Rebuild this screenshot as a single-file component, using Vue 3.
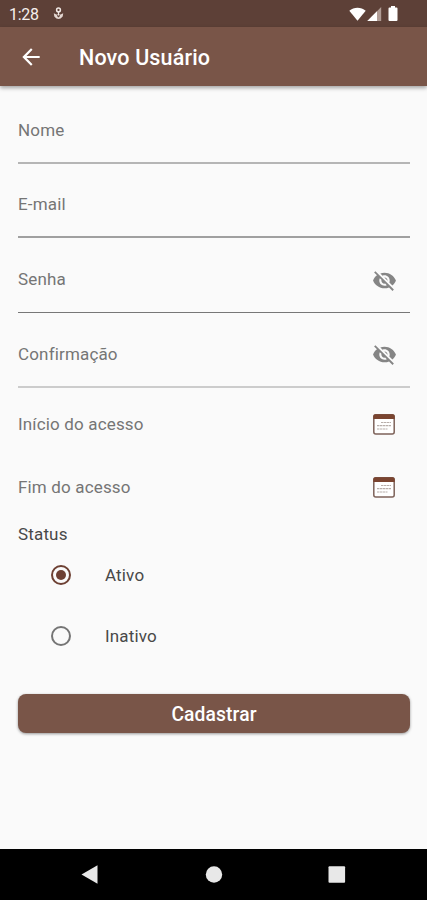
<template>
  <div class="screen">
    <header class="status-bar">
      <span class="clock">1:28</span>
      <svg class="debug-icon" width="11" height="13" viewBox="0 0 11 13">
        <circle cx="5.500" cy="3" r="1.900" fill="none" stroke="#f0e8e5" stroke-width="1.500" />
        <path d="M.8 6.300l2.500 1.200h4.400l2.500-1.200-.5 3.200q-4.200 5.200-8.400 0z" fill="#e3d6d1" />
        <path d="M4.200 8h2.600v1.300L5.500 10.500 4.200 9.300z" fill="#5d4037" />
        <path d="M5.500 4.500v4" stroke="#f0e8e5" stroke-width="1.200" />
      </svg>
      <div class="system-icons">
        <svg width="17" height="14" viewBox="0 0 17 14">
          <path d="M.3 3.700C4.900-.4 12.100-.4 16.700 3.700L8.500 13.700z" fill="#fff" />
        </svg>
        <svg width="15" height="14" viewBox="0 0 15 14">
          <path d="M14.200 0v14H.3z" fill="#b09c95" />
          <path d="M10 4.200V14H.3z" fill="#fff" />
        </svg>
        <svg class="battery" width="10" height="15" viewBox="0 0 10 15">
          <path d="M3 0h4v1.500h1.500q1 0 1 1V14q0 1-1 1h-7q-1 0-1-1V2.500q0-1 1-1H3z" fill="#fff" />
        </svg>
      </div>
    </header>

    <div class="app-bar">
      <button class="back" type="button" aria-label="Voltar">
        <svg width="26" height="26" viewBox="0 0 24 24" fill="#fff">
          <path d="M20 11H7.830l5.590-5.590L12 4l-8 8 8 8 1.410-1.410L7.830 13H20v-2z" />
        </svg>
      </button>
      <h1>Novo Usuário</h1>
    </div>

    <main class="form">
      <div v-for="field in fields" :key="field.name" class="field" :class="field.name">
        <span class="label">{{ field.label }}</span>
        <svg v-if="field.secret" class="eye" width="25" height="25" viewBox="0 0 24 24" fill="#858585">
          <path d="M12 7c2.760 0 5 2.240 5 5 0 .65-.13 1.260-.36 1.830l2.920 2.920c1.510-1.260 2.700-2.890 3.430-4.750-1.730-4.390-6-7.500-11-7.500-1.400 0-2.740.25-3.980.7l2.160 2.160C10.740 7.130 11.350 7 12 7zM2 4.270l2.280 2.280.46.46C3.080 8.300 1.780 10.020 1 12c1.730 4.390 6 7.500 11 7.500 1.550 0 3.030-.3 4.380-.84l.42.42L19.730 22 21 20.730 3.270 3 2 4.270zM7.530 9.800l1.550 1.550c-.05.21-.08.43-.08.65 0 1.660 1.340 3 3 3 .22 0 .44-.03.65-.08l1.550 1.550c-.67.33-1.410.53-2.200.53-2.760 0-5-2.240-5-5 0-.79.2-1.530.53-2.200zm4.310-.78l3.150 3.150.02-.16c0-1.660-1.340-3-3-3l-.17.01z" />
        </svg>
      </div>

      <div v-for="date in dates" :key="date" class="date-row">
        <span class="label">{{ date }}</span>
        <svg class="calendar" width="22" height="21" viewBox="0 0 22 21">
          <rect x=".8" y=".8" width="20.400" height="19.200" rx="2" fill="#fff" stroke="#7d6259" stroke-width="1.500" />
          <path d="M.3 5V2.500Q.3.2 2.500.2h17q2.200 0 2.200 2.300V5z" fill="#7a4430" />
          <path d="M8 8.500h10M4 11.700h14M4 15h10.500" stroke="#b8aeaa" stroke-width="1.200" stroke-dasharray="2.500 .5" />
        </svg>
      </div>

      <p class="status-title">Status</p>
      <label v-for="option in options" :key="option" class="option">
        <input v-model="status" type="radio" name="status" :value="option" />
        <span class="radio"></span>
        <span>{{ option }}</span>
      </label>

      <button class="submit" type="button">Cadastrar</button>
    </main>

    <nav class="nav-bar">
      <svg width="427" height="51" viewBox="0 0 427 51" fill="#e8e8e8">
        <path d="M81.500 25.500L97.500 16.200V34.800z" />
        <circle cx="214" cy="25.500" r="8.200" />
        <rect x="328.500" y="17.200" width="16.600" height="16.600" rx="1" />
      </svg>
    </nav>
  </div>
</template>

<script setup>
import { ref } from "vue";

const fields = [
  { name: "nome", label: "Nome" },
  { name: "email", label: "E-mail" },
  { name: "senha", label: "Senha", secret: true },
  { name: "confirmacao", label: "Confirmação", secret: true },
];

const dates = ["Início do acesso", "Fim do acesso"];
const options = ["Ativo", "Inativo"];
const status = ref("Ativo");
</script>

<style>
body {
  margin: 0;
}
</style>

<style scoped>
.screen {
  display: flex;
  flex-direction: column;
  width: 427px;
  height: 900px;
  overflow: hidden;
  background: #fafafa;
  color: #484848;
  font-family: Roboto, sans-serif;
  font-size: 17px;
  letter-spacing: 0.16px;
}

.status-bar {
  display: flex;
  align-items: center;
  box-sizing: border-box;
  height: 27px;
  padding: 0 29px 0 9px;
  background: #5d4037;
  color: #f5efed;
}

.clock {
  margin-top: 2px;
  font-size: 16px;
  letter-spacing: -0.3px;
}

.debug-icon {
  margin-left: 14px;
}

.system-icons {
  display: flex;
  align-items: center;
  gap: 1px;
  margin-left: auto;
}

.battery {
  margin-left: 5px;
}

.app-bar {
  display: flex;
  align-items: center;
  box-sizing: border-box;
  height: 59px;
  padding: 1px 18px 0;
  background: #795548;
  box-shadow: 0 2px 4px rgba(0, 0, 0, 0.35);
  color: #fff;
}

.back {
  display: flex;
  padding: 0;
  border: 0;
  background: none;
}

h1 {
  margin: 0 0 0 35px;
  font-size: 21.5px;
  font-weight: 500;
}

.form {
  display: flex;
  flex: 1;
  flex-direction: column;
  padding: 3px 17px 0 18px;
}

.field {
  display: flex;
  align-items: center;
  justify-content: space-between;
  box-sizing: border-box;
  height: 67px;
  margin-top: 8px;
  border-bottom: 2px solid #b5b5b5;
}

.field.email {
  height: 66px;
  border-color: #a0a0a0;
}

.field.senha {
  border-bottom: 1px solid #777;
}

.field.confirmacao {
  border-color: #ccc;
}

.label {
  color: #757575;
}

.eye {
  margin: 2px 13px 0 0;
}

.date-row {
  display: flex;
  align-items: center;
  justify-content: space-between;
  height: 63px;
  margin-top: 4px;
}

.date-row + .date-row {
  margin-top: 0;
}

.calendar {
  margin: 2px 15px 0 0;
}

.status-title {
  margin: 6px 0 0;
  line-height: 20px;
}

.option {
  display: flex;
  align-items: center;
  height: 61px;
  padding-left: 33px;
}

.option input {
  position: absolute;
  opacity: 0;
}

.radio {
  display: flex;
  align-items: center;
  justify-content: center;
  box-sizing: border-box;
  width: 20px;
  height: 20px;
  margin-right: 34px;
  border: 2px solid #757575;
  border-radius: 50%;
}

input:checked + .radio {
  border-color: #6d4033;
}

input:checked + .radio::before {
  width: 10px;
  height: 10px;
  border-radius: 50%;
  background: #6d4033;
  content: "";
}

.submit {
  height: 39px;
  margin-top: 28px;
  padding: 2px 0 0;
  border: 0;
  border-radius: 8px;
  background: #795548;
  box-shadow: 0 1px 3px rgba(0, 0, 0, 0.4);
  color: #fff;
  font-family: inherit;
  font-size: 19.3px;
  font-weight: 500;
  letter-spacing: 0.1px;
}

.nav-bar {
  height: 51px;
  background: #000;
}
</style>
